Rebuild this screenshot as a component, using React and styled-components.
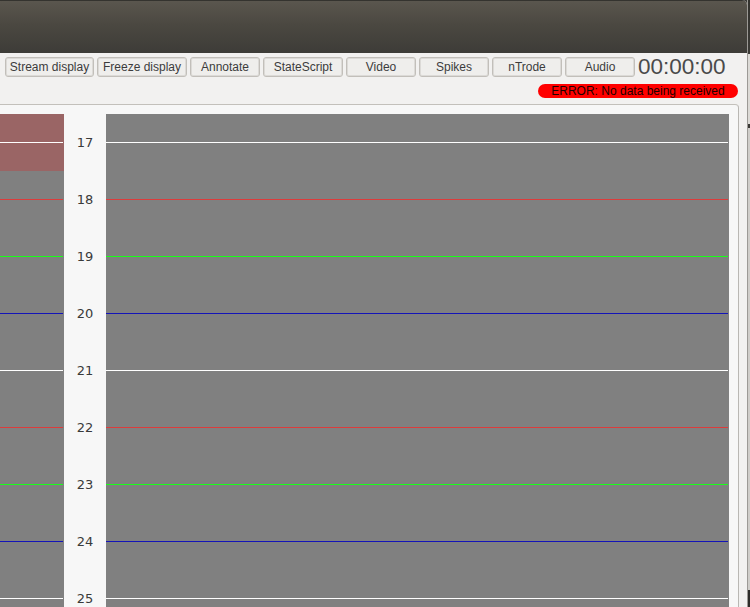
import React from "react";
import styled, { createGlobalStyle } from "styled-components";

const Global = createGlobalStyle`
  html, body { margin: 0; padding: 0; overflow: hidden; background: #3c3b37; }
  #root { width: 750px; height: 607px; }
`;

const Screen = styled.div`
  width: 750px;
  height: 607px;
  display: flex;
  overflow: hidden;
  font-family: "Liberation Sans", Arial, sans-serif;
`;

const Window = styled.div`
  width: 747px;
  height: 607px;
  display: flex;
  flex-direction: column;
  background: #f2f1f0;
  border-top-right-radius: 5px;
  overflow: hidden;
`;

const SideStrip = styled.div`
  flex: 1;
  background: linear-gradient(
    #33322e 0px, #3c3b37 54px, #dcdad6 54px, #dcdad6 124px,
    #3a3935 124px, #3a3935 128px, #cfcdc9 128px, #cfcdc9 590px,
    #2e2d2a 590px
  );
  border-left: 1px solid #9c9a96;
`;

const TitleBar = styled.div`
  height: 52px;
  flex: none;
  border-top: 1px solid #34332f;
  background: linear-gradient(#5a564e 0%, #4b4841 45%, #3d3c38 100%);
`;

const Toolbar = styled.div`
  flex: none;
  height: 51px;
  box-sizing: border-box;
  padding: 4px 9px 6px 5px;
  display: flex;
  flex-direction: column;
  gap: 7px;
  background: #f2f1f0;
`;

const ButtonRow = styled.div`
  display: flex;
  align-items: center;
  gap: 3px;
  height: 20px;
`;

const Button = styled.button`
  width: ${(p) => p.$w}px;
  height: 20px;
  box-sizing: border-box;
  margin: 0;
  padding: 0;
  border: 1px solid #c2bfba;
  box-shadow: inset 0 0 0 1px #dcdad7;
  border-radius: 3px;
  background: #efeeec;
  color: #3c3c3c;
  font-family: "Liberation Sans", Arial, sans-serif;
  font-size: 12px;
  line-height: 18px;
  text-align: center;
  white-space: nowrap;
`;

const Clock = styled.div`
  font-family: "Liberation Sans", Arial, sans-serif;
  font-size: 22.5px;
  line-height: 20px;
  color: #4a4a4a;
`;

const StatusRow = styled.div`
  display: flex;
  justify-content: flex-end;
  height: 14px;
`;

const ErrorBadge = styled.div`
  width: 200px;
  height: 14px;
  border-radius: 7px;
  background: #ff0000;
  color: #1c0000;
  font-size: 12px;
  line-height: 14px;
  text-align: center;
  white-space: nowrap;
`;

const Panel = styled.div`
  flex: 1;
  min-height: 0;
  width: 739px;
  box-sizing: border-box;
  background: #f7f7f7;
  border-top: 1px solid #c3c0bb;
  border-right: 1px solid #b9b7b3;
  border-top-right-radius: 4px;
  padding: 9px 9px 0 0;
  overflow: hidden;
`;

const Channels = styled.div`
  display: flex;
  flex-direction: column;
`;

const ChannelRow = styled.div`
  display: grid;
  grid-template-columns: 64px 42px 1fr;
  height: 57px;
  flex: none;
`;

const Trace = styled.div`
  background: ${(p) => (p.$highlight ? "#9a6565" : "#808080")};
  display: flex;
  flex-direction: column;
  justify-content: center;
`;

const TraceLine = styled.div`
  height: 1px;
  margin-right: 1px;
  background: ${(p) => p.$color};
`;

const Label = styled.div`
  display: flex;
  align-items: center;
  justify-content: center;
  font-family: "DejaVu Sans", sans-serif;
  font-size: 13px;
  color: #3a3a3a;
  padding-bottom: 1px;
`;

const buttons = [
  ["Stream display", 89],
  ["Freeze display", 90],
  ["Annotate", 70],
  ["StateScript", 80],
  ["Video", 70],
  ["Spikes", 70],
  ["nTrode", 70],
  ["Audio", 70],
];

const WHITE = "#ffffff";
const RED = "#dc3c3c";
const GREEN = "#19ff19";
const BLUE = "#1414b8";

const channels = [
  { n: 17, c: WHITE, hl: true },
  { n: 18, c: RED },
  { n: 19, c: GREEN },
  { n: 20, c: BLUE },
  { n: 21, c: WHITE },
  { n: 22, c: RED },
  { n: 23, c: GREEN },
  { n: 24, c: BLUE },
  { n: 25, c: WHITE },
];

export default function App() {
  return (
    <>
      <Global />
      <Screen>
        <Window>
          <TitleBar />
          <Toolbar>
            <ButtonRow>
              {buttons.map(([t, w]) => (
                <Button key={t} $w={w}>
                  {t}
                </Button>
              ))}
              <Clock>00:00:00</Clock>
            </ButtonRow>
            <StatusRow>
              <ErrorBadge>ERROR: No data being received</ErrorBadge>
            </StatusRow>
          </Toolbar>
          <Panel>
            <Channels>
              {channels.map((ch) => (
                <ChannelRow key={ch.n}>
                  <Trace $highlight={ch.hl}>
                    <TraceLine $color={ch.c} />
                  </Trace>
                  <Label>{ch.n}</Label>
                  <Trace>
                    <TraceLine $color={ch.c} />
                  </Trace>
                </ChannelRow>
              ))}
            </Channels>
          </Panel>
        </Window>
        <SideStrip />
      </Screen>
    </>
  );
}
